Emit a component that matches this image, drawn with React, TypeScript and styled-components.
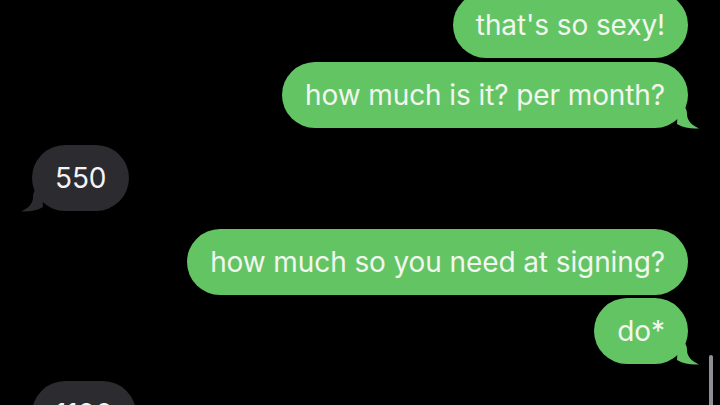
import { FC } from 'react'
import styled, { createGlobalStyle } from 'styled-components'

type Msg = { id: number; text: string; mine: boolean; tail: boolean; gapBefore: number }

const messages: Msg[] = [
  { id: 1, text: "that's so sexy!", mine: true, tail: false, gapBefore: 0 },
  { id: 2, text: 'how much is it? per month?', mine: true, tail: true, gapBefore: 4 },
  { id: 3, text: '550', mine: false, tail: true, gapBefore: 17 },
  { id: 4, text: 'how much so you need at signing?', mine: true, tail: false, gapBefore: 18 },
  { id: 5, text: 'do*', mine: true, tail: true, gapBefore: 3 },
  { id: 6, text: '1100', mine: false, tail: false, gapBefore: 17 },
]

const GREEN = '#63c464'
const GRAY = '#2b2b30'

const Tail: FC<{ mine: boolean }> = ({ mine }) => (
  <TailSvg $mine={mine} width="24" height="24" viewBox="0 0 24 24">
    <path
      d="M2 0 C8 0 11 3 11 9 C11 15 15 20 23 23.5 C15 24 8 23 1 19 Z"
      fill={mine ? GREEN : GRAY}
    />
  </TailSvg>
)

export default function App() {
  return (
    <>
      <GlobalStyle />
      <Thread>
        {messages.map((m) => (
          <Row key={m.id} $mine={m.mine} $gap={m.gapBefore}>
            <Bubble $mine={m.mine}>
              {m.text}
              {m.tail && <Tail mine={m.mine} />}
            </Bubble>
          </Row>
        ))}
      </Thread>
      <Scrollbar />
    </>
  )
}

const GlobalStyle = createGlobalStyle`
  html, body {
    margin: 0;
    padding: 0;
    background: #000;
    width: 720px;
    height: 405px;
    overflow: hidden;
  }
  body {
    font-family: Inter, "Liberation Sans", sans-serif;
  }
`

const Thread = styled.div`
  display: flex;
  flex-direction: column;
  padding: 0 32px;
  margin-top: -8px;
`

const Row = styled.div<{ $mine: boolean; $gap: number }>`
  display: flex;
  justify-content: ${(p) => (p.$mine ? 'flex-end' : 'flex-start')};
  margin-top: ${(p) => p.$gap}px;
`

const Bubble = styled.div<{ $mine: boolean }>`
  position: relative;
  height: 66px;
  box-sizing: border-box;
  padding: 0 23px;
  display: flex;
  align-items: center;
  border-radius: 33px;
  font-size: 28px;
  letter-spacing: -0.1px;
  white-space: nowrap;
  background: ${(p) => (p.$mine ? GREEN : GRAY)};
  color: ${(p) => (p.$mine ? '#f1f7ee' : '#f4f4f6')};
`

const TailSvg = styled.svg<{ $mine: boolean }>`
  position: absolute;
  bottom: -1px;
  ${(p) => (p.$mine ? 'right: -12px;' : 'left: -12px; transform: scaleX(-1);')}
`

const Scrollbar = styled.div`
  position: fixed;
  right: 7px;
  top: 355px;
  width: 4px;
  height: 60px;
  border-radius: 2px;
  background: #8e8e93;
`
